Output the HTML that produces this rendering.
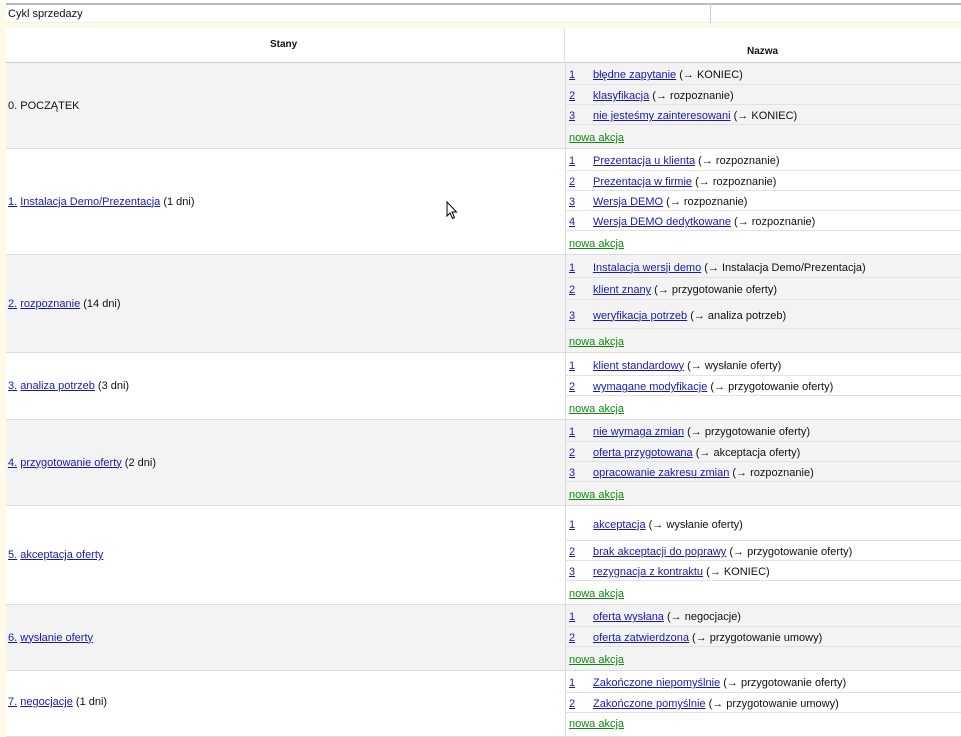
<!DOCTYPE html>
<html><head><meta charset="utf-8"><style>
*{margin:0;padding:0;box-sizing:border-box}
body{width:961px;height:730px;overflow:hidden;background:#fdfbe8;font-family:"Liberation Sans",sans-serif;font-size:11px;color:#111;position:relative}
.a{position:absolute}
a{color:#1a1ab0;text-decoration:underline}
a.g{color:#118811}
.row{position:absolute;left:6px;width:955px;border-bottom:1px solid #dcdcdc}
.grey{background:#f3f3f3}
.white{background:#fff}
.lt{position:absolute;left:2px;top:0;bottom:0;display:flex;align-items:center}
.sub{position:absolute;left:559px;width:396px;display:flex;align-items:center;padding-top:3px;border-bottom:1px solid #e2e2e2;border-left:1px solid #dcdcdc}
.sub:last-child{border-bottom:none}
.n{width:27px;padding-left:3px}
</style></head><body>
<div class="a" style="left:0;top:0;width:961px;height:3px;background:#fff"></div>
<div class="a" style="left:6px;top:3px;width:955px;height:20px;background:#fff;border-top:2px solid #bbb;border-bottom:1px solid #eee"></div>
<div class="a" style="left:8px;top:8px;">Cykl sprzedazy</div>
<div class="a" style="left:710px;top:3px;width:1px;height:20px;background:#ccc"></div>
<div class="a" style="left:6px;top:28px;width:955px;height:35px;background:#fff;border-bottom:1px solid #ccc"></div>
<div class="a" style="left:564px;top:28px;width:1px;height:35px;background:#ddd"></div>
<div class="a" style="left:270px;top:39px;font-weight:bold;font-size:10px">Stany</div>
<div class="a" style="left:747px;top:46px;font-weight:bold;font-size:10px">Nazwa</div>

<div class="row grey" style="top:63px;height:86px">
<div class="lt">0. POCZĄTEK</div>
<div class="sub" style="top:0;height:22px"><span class="n"><a>1</a></span><a>błędne zapytanie</a>&nbsp;(→ KONIEC)</div>
<div class="sub" style="top:22px;height:20px"><span class="n"><a>2</a></span><a>klasyfikacja</a>&nbsp;(→ rozpoznanie)</div>
<div class="sub" style="top:42px;height:20px"><span class="n"><a>3</a></span><a>nie jesteśmy zainteresowani</a>&nbsp;(→ KONIEC)</div>
<div class="sub" style="top:62px;height:23px"><a class="g" style="padding-left:3px">nowa akcja</a></div>
</div>

<div class="row white" style="top:149px;height:106px">
<div class="lt"><a>1.</a>&nbsp;<a>Instalacja Demo/Prezentacja</a>&nbsp;(1 dni)</div>
<div class="sub" style="top:0;height:22px"><span class="n"><a>1</a></span><a>Prezentacja u klienta</a>&nbsp;(→ rozpoznanie)</div>
<div class="sub" style="top:22px;height:20px"><span class="n"><a>2</a></span><a>Prezentacja w firmie</a>&nbsp;(→ rozpoznanie)</div>
<div class="sub" style="top:42px;height:20px"><span class="n"><a>3</a></span><a>Wersja DEMO</a>&nbsp;(→ rozpoznanie)</div>
<div class="sub" style="top:62px;height:20px"><span class="n"><a>4</a></span><a>Wersja DEMO dedytkowane</a>&nbsp;(→ rozpoznanie)</div>
<div class="sub" style="top:82px;height:23px"><a class="g" style="padding-left:3px">nowa akcja</a></div>
</div>

<div class="row grey" style="top:255px;height:98px">
<div class="lt"><a>2.</a>&nbsp;<a>rozpoznanie</a>&nbsp;(14 dni)</div>
<div class="sub" style="top:0;height:23px"><span class="n"><a>1</a></span><a>Instalacja wersji demo</a>&nbsp;(→ Instalacja Demo/Prezentacja)</div>
<div class="sub" style="top:23px;height:22px"><span class="n"><a>2</a></span><a>klient znany</a>&nbsp;(→ przygotowanie oferty)</div>
<div class="sub" style="top:45px;height:29px"><span class="n"><a>3</a></span><a>weryfikacja potrzeb</a>&nbsp;(→ analiza potrzeb)</div>
<div class="sub" style="top:74px;height:23px"><a class="g" style="padding-left:3px">nowa akcja</a></div>
</div>

<div class="row white" style="top:353px;height:67px">
<div class="lt"><a>3.</a>&nbsp;<a>analiza potrzeb</a>&nbsp;(3 dni)</div>
<div class="sub" style="top:0;height:23px"><span class="n"><a>1</a></span><a>klient standardowy</a>&nbsp;(→ wysłanie oferty)</div>
<div class="sub" style="top:23px;height:20px"><span class="n"><a>2</a></span><a>wymagane modyfikacje</a>&nbsp;(→ przygotowanie oferty)</div>
<div class="sub" style="top:43px;height:23px"><a class="g" style="padding-left:3px">nowa akcja</a></div>
</div>

<div class="row grey" style="top:420px;height:86px">
<div class="lt"><a>4.</a>&nbsp;<a>przygotowanie oferty</a>&nbsp;(2 dni)</div>
<div class="sub" style="top:0;height:22px"><span class="n"><a>1</a></span><a>nie wymaga zmian</a>&nbsp;(→ przygotowanie oferty)</div>
<div class="sub" style="top:22px;height:20px"><span class="n"><a>2</a></span><a>oferta przygotowana</a>&nbsp;(→ akceptacja oferty)</div>
<div class="sub" style="top:42px;height:20px"><span class="n"><a>3</a></span><a>opracowanie zakresu zmian</a>&nbsp;(→ rozpoznanie)</div>
<div class="sub" style="top:62px;height:23px"><a class="g" style="padding-left:3px">nowa akcja</a></div>
</div>

<div class="row white" style="top:506px;height:99px">
<div class="lt"><a>5.</a>&nbsp;<a>akceptacja oferty</a></div>
<div class="sub" style="top:0;height:35px"><span class="n"><a>1</a></span><a>akceptacja</a>&nbsp;(→ wysłanie oferty)</div>
<div class="sub" style="top:35px;height:20px"><span class="n"><a>2</a></span><a>brak akceptacji do poprawy</a>&nbsp;(→ przygotowanie oferty)</div>
<div class="sub" style="top:55px;height:20px"><span class="n"><a>3</a></span><a>rezygnacja z kontraktu</a>&nbsp;(→ KONIEC)</div>
<div class="sub" style="top:75px;height:23px"><a class="g" style="padding-left:3px">nowa akcja</a></div>
</div>

<div class="row grey" style="top:605px;height:66px">
<div class="lt"><a>6.</a>&nbsp;<a>wysłanie oferty</a></div>
<div class="sub" style="top:0;height:22px"><span class="n"><a>1</a></span><a>oferta wysłana</a>&nbsp;(→ negocjacje)</div>
<div class="sub" style="top:22px;height:20px"><span class="n"><a>2</a></span><a>oferta zatwierdzona</a>&nbsp;(→ przygotowanie umowy)</div>
<div class="sub" style="top:42px;height:23px"><a class="g" style="padding-left:3px">nowa akcja</a></div>
</div>

<div class="row white" style="top:671px;height:66px">
<div class="lt" style="bottom:3px"><a>7.</a>&nbsp;<a>negocjacje</a>&nbsp;(1 dni)</div>
<div class="sub" style="top:0;height:22px"><span class="n"><a>1</a></span><a>Zakończone niepomyślnie</a>&nbsp;(→ przygotowanie oferty)</div>
<div class="sub" style="top:22px;height:20px"><span class="n"><a>2</a></span><a>Zakończone pomyślnie</a>&nbsp;(→ przygotowanie umowy)</div>
<div class="sub" style="top:42px;height:23px;align-items:flex-start;padding-top:5px"><a class="g" style="padding-left:3px">nowa akcja</a></div>
</div>

<svg class="a" style="left:446px;top:201px" width="12" height="19" viewBox="0 0 12 19"><path d="M1 1 L1 15 L4 12 L6.5 17.5 L8.5 16.5 L6 11 L10.5 11 Z" fill="#fff" stroke="#000" stroke-width="1"/></svg>
</body></html>
